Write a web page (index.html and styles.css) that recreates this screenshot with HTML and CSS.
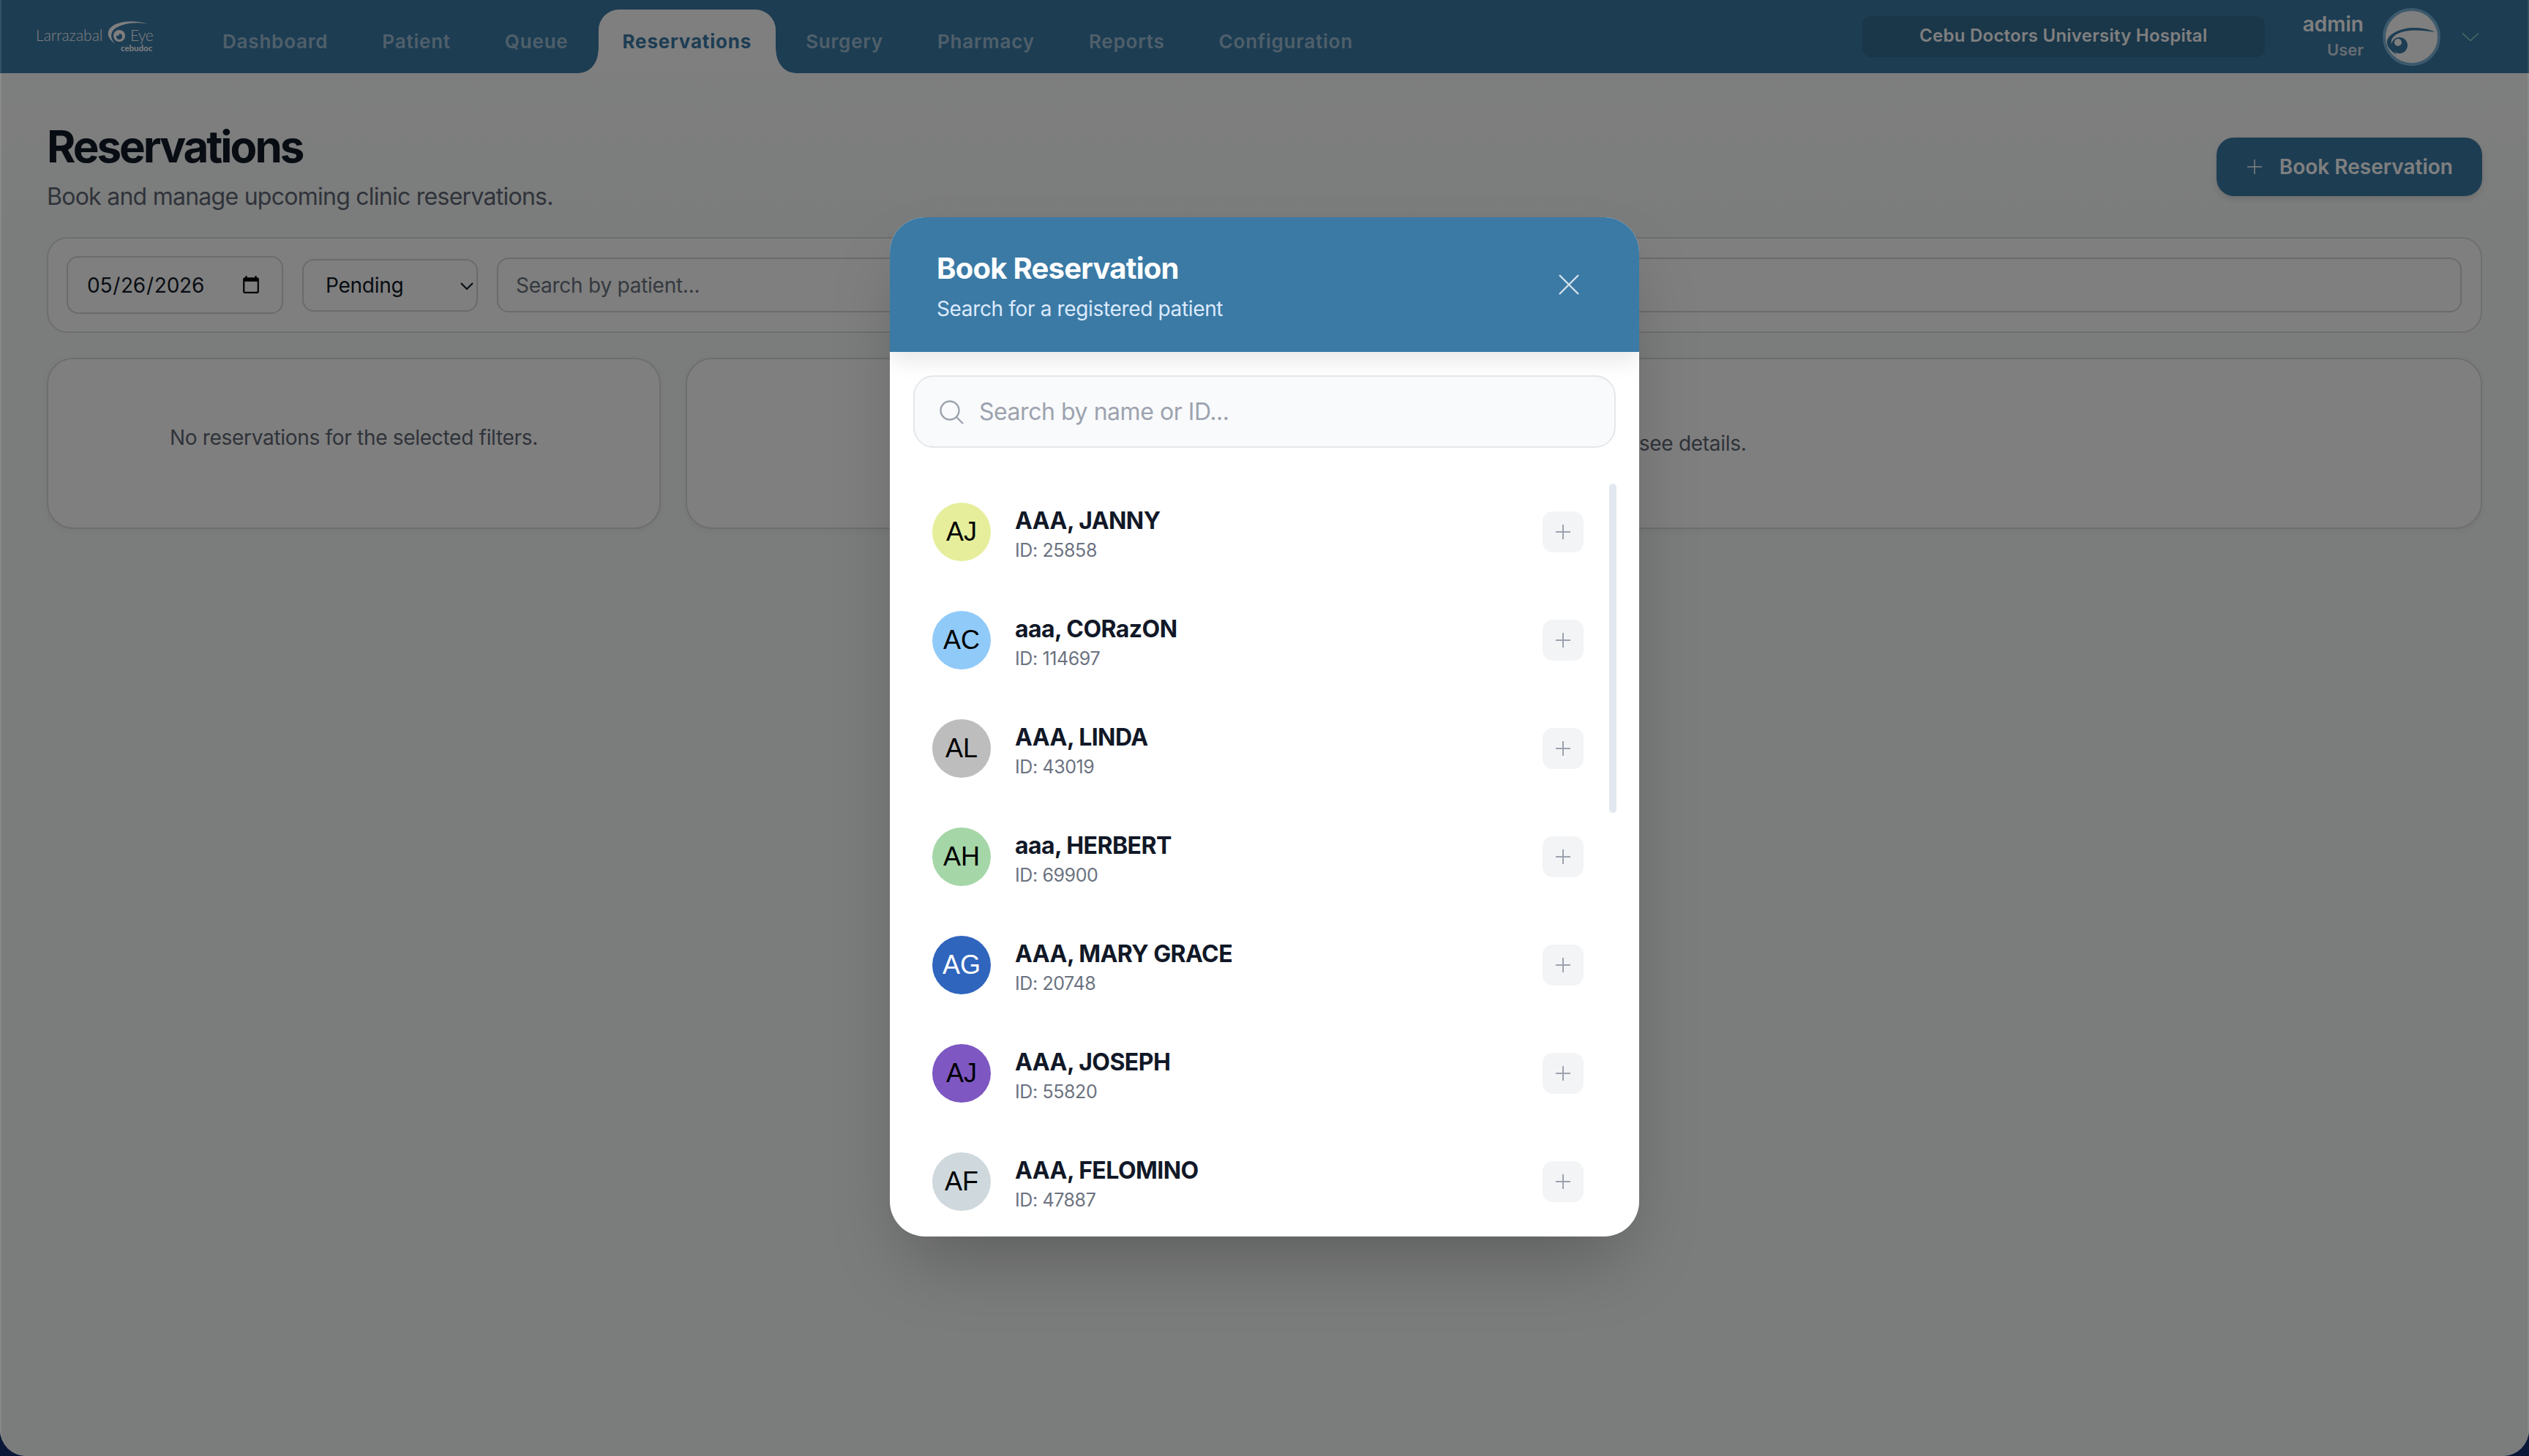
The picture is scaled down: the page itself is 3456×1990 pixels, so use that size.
FILE: index.html
```html
<!DOCTYPE html>
<html>
<head>
	<title>Reservations</title>
	<link rel="stylesheet" href="styles.css">
</head>
<body>
	<div class="window">
		<!-- Navigation Bar -->
		<nav class="topbar">
			<svg class="logo" width="170" height="60" viewBox="0 0 170 60">
				<text x="1" y="36" class="logo-text">Larrazabal</text>
				<text x="130" y="36" class="logo-text logo-eye">Eye</text>
				<path d="M110 40C100 34 96 24 104 17C112 10 132 6 155 13C138 9 118 12 108 20C102 26 103 34 110 40Z" fill="#fff"/>
				<circle cx="115" cy="29" r="8" fill="#fff"/>
				<circle cx="115" cy="30" r="4" fill="#3a7aa6"/>
				<circle cx="113" cy="27" r="2" fill="#fff"/>
				<text x="117" y="50" class="logo-small">cebudoc</text>
			</svg>
			<ul class="nav-links">
				<li><a href="#">Dashboard</a></li>
				<li><a href="#">Patient</a></li>
				<li><a href="#">Queue</a></li>
				<li class="active"><a href="#">Reservations</a></li>
				<li><a href="#">Surgery</a></li>
				<li><a href="#">Pharmacy</a></li>
				<li><a href="#">Reports</a></li>
				<li><a href="#">Configuration</a></li>
			</ul>
			<div class="hospital">Cebu Doctors University Hospital</div>
			<div class="user-info">
				<div class="user-name">admin</div>
				<div class="user-role">User</div>
			</div>
			<div class="user-photo">
				<svg width="71" height="71" viewBox="0 0 71 71">
					<path d="M15 60C6 54 -1 46 3 38C8 28 28 22 40 23C50 23 60 25 68 29C55 27 42 26 32 27C20 28 10 33 8 40C7 47 10 53 15 60Z" fill="#3a7aa6"/>
					<circle cx="19" cy="47" r="11" fill="#3a7aa6"/>
					<circle cx="17" cy="43" r="5" fill="#fff"/>
				</svg>
			</div>
			<svg class="chevron" width="24" height="13" viewBox="0 0 24 13">
				<path d="M1 1.500L12 11.500L23 1.500" fill="none" stroke="#8ce0c8" stroke-width="1.5"/>
			</svg>
		</nav>

		<!-- Reservations Page -->
		<main class="page">
			<div class="page-head">
				<div>
					<h1>Reservations</h1>
					<p class="page-sub">Book and manage upcoming clinic reservations.</p>
				</div>
				<button class="book-btn">
					<svg width="24" height="24" viewBox="0 0 24 24"><path d="M12 2V22M2 12H22" stroke="#fff" stroke-width="1.5"/></svg>
					Book Reservation
				</button>
			</div>

			<div class="filters">
				<input class="filter-date" type="date" value="2026-05-26">
				<select class="filter-status">
					<option>Pending</option>
				</select>
				<input class="filter-search" type="text" placeholder="Search by patient...">
			</div>

			<div class="panels">
				<div class="panel panel-list">No reservations for the selected filters.</div>
				<div class="panel panel-detail">Select a reservation to see details.</div>
			</div>
		</main>

		<!-- Book Reservation Modal -->
		<div class="overlay">
			<div class="modal">
				<div class="modal-head">
					<div>
						<h2>Book Reservation</h2>
						<p>Search for a registered patient</p>
					</div>
					<svg class="modal-close" width="30" height="30" viewBox="0 0 30 30">
						<path d="M2 2L28 28M28 2L2 28" stroke="#d3e1ea" stroke-width="2.4"/>
					</svg>
				</div>
				<div class="modal-body">
					<div class="patient-search">
						<svg width="36" height="36" viewBox="0 0 36 36">
							<circle cx="16" cy="16" r="12.5" fill="none" stroke="#9ca3af" stroke-width="2.4"/>
							<path d="M25 25L34 34" stroke="#9ca3af" stroke-width="2.4"/>
						</svg>
						<input type="text" placeholder="Search by name or ID...">
					</div>
					<div class="patient-list">
						<div class="scroll-thumb"></div>
						<div class="patient">
							<div class="avatar av-lime">AJ</div>
							<div class="patient-info">
								<div class="patient-name">AAA, JANNY</div>
								<div class="patient-id">ID: 25858</div>
							</div>
							<button class="add-btn"><svg width="24" height="24" viewBox="0 0 24 24"><path d="M12 2V22M2 12H22" stroke="#9ca3af" stroke-width="2"/></svg></button>
						</div>
						<div class="patient">
							<div class="avatar av-sky">AC</div>
							<div class="patient-info">
								<div class="patient-name">aaa, CORazON</div>
								<div class="patient-id">ID: 114697</div>
							</div>
							<button class="add-btn"><svg width="24" height="24" viewBox="0 0 24 24"><path d="M12 2V22M2 12H22" stroke="#9ca3af" stroke-width="2"/></svg></button>
						</div>
						<div class="patient">
							<div class="avatar av-gray">AL</div>
							<div class="patient-info">
								<div class="patient-name">AAA, LINDA</div>
								<div class="patient-id">ID: 43019</div>
							</div>
							<button class="add-btn"><svg width="24" height="24" viewBox="0 0 24 24"><path d="M12 2V22M2 12H22" stroke="#9ca3af" stroke-width="2"/></svg></button>
						</div>
						<div class="patient">
							<div class="avatar av-green">AH</div>
							<div class="patient-info">
								<div class="patient-name">aaa, HERBERT</div>
								<div class="patient-id">ID: 69900</div>
							</div>
							<button class="add-btn"><svg width="24" height="24" viewBox="0 0 24 24"><path d="M12 2V22M2 12H22" stroke="#9ca3af" stroke-width="2"/></svg></button>
						</div>
						<div class="patient">
							<div class="avatar av-blue">AG</div>
							<div class="patient-info">
								<div class="patient-name">AAA, MARY GRACE</div>
								<div class="patient-id">ID: 20748</div>
							</div>
							<button class="add-btn"><svg width="24" height="24" viewBox="0 0 24 24"><path d="M12 2V22M2 12H22" stroke="#9ca3af" stroke-width="2"/></svg></button>
						</div>
						<div class="patient">
							<div class="avatar av-purple">AJ</div>
							<div class="patient-info">
								<div class="patient-name">AAA, JOSEPH</div>
								<div class="patient-id">ID: 55820</div>
							</div>
							<button class="add-btn"><svg width="24" height="24" viewBox="0 0 24 24"><path d="M12 2V22M2 12H22" stroke="#9ca3af" stroke-width="2"/></svg></button>
						</div>
						<div class="patient">
							<div class="avatar av-slate">AF</div>
							<div class="patient-info">
								<div class="patient-name">AAA, FELOMINO</div>
								<div class="patient-id">ID: 47887</div>
							</div>
							<button class="add-btn"><svg width="24" height="24" viewBox="0 0 24 24"><path d="M12 2V22M2 12H22" stroke="#9ca3af" stroke-width="2"/></svg></button>
						</div>
					</div>
				</div>
			</div>
		</div>
	</div>
</body>
</html>
```

FILE: styles.css
```css
html, body {
	margin: 0;
	height: 100%;
	background-color: #0b1838;
	overflow: hidden;
}

body {
	font-family: Inter, "Liberation Sans", sans-serif;
}

.window {
	position: relative;
	height: 1990px;
	overflow: hidden;
	border-radius: 0 0 36px 36px;
	background: linear-gradient(#fefefe 0, #f6faf8 340px);
}

/* Navigation Bar */
.topbar {
	display: flex;
	align-items: center;
	height: 100px;
	padding: 0 68px 0 48px;
	background-color: #3a7aa6;
}

.logo {
	flex: none;
	margin: 0 53px 0 0;
}

.logo-text {
	font-family: Lato, sans-serif;
	font-weight: 300;
	font-size: 21px;
	fill: #fff;
}

.logo-eye {
	letter-spacing: -0.6px;
}

.logo-small {
	font-family: Lato, sans-serif;
	font-weight: 700;
	font-size: 11.5px;
	fill: #fff;
}

.nav-links {
	list-style: none;
	margin: 0;
	padding: 0;
	display: flex;
	gap: 8px;
	align-self: flex-end;
	flex: 1;
	height: 87px;
}

.nav-links li {
	position: relative;
	display: flex;
	align-items: center;
	padding: 0 33px;
	border-radius: 28px 28px 0 0;
}

.nav-links a {
	color: #ddeaf3;
	opacity: 0.62;
	font-size: 26px;
	font-weight: 600;
	letter-spacing: 0.8px;
	text-decoration: none;
}

.nav-links .active {
	background-color: #fff;
}

.nav-links .active a {
	color: #3a7aa6;
	font-weight: 700;
	opacity: 1;
}

.nav-links .active::before,
.nav-links .active::after {
	content: "";
	position: absolute;
	bottom: 0;
	width: 26px;
	height: 32px;
}

.nav-links .active::before {
	left: -26px;
	background: radial-gradient(26px 32px at 0 0, transparent 97%, #fff 100%);
}

.nav-links .active::after {
	right: -26px;
	background: radial-gradient(26px 32px at 100% 0, transparent 97%, #fff 100%);
}

.hospital {
	flex: none;
	box-sizing: border-box;
	width: 550px;
	margin-right: 52px;
	padding: 13px 0 15px;
	text-align: center;
	color: #fff;
	font-size: 24px;
	font-weight: 600;
	line-height: 28px;
	letter-spacing: 0.25px;
	border-radius: 12px;
	background-color: #346c93;
}

.user-info {
	flex: none;
	text-align: right;
	margin-right: 26px;
}

.user-name {
	color: #fff;
	font-size: 28px;
	font-weight: 600;
	line-height: 36px;
	margin-top: -3px;
}

.user-role {
	color: #cfdbe4;
	font-size: 22px;
	font-weight: 600;
	line-height: 30px;
	margin-top: 2px;
}

.user-photo {
	flex: none;
	display: flex;
	align-items: center;
	justify-content: center;
	box-sizing: border-box;
	width: 79px;
	height: 79px;
	border: 4px solid #7ab4d8;
	border-radius: 50%;
	background-color: #fff;
}

.chevron {
	flex: none;
	margin-left: 29px;
}

/* Reservations Page */
.page {
	padding: 0 64px;
}

.page-head {
	display: flex;
	justify-content: space-between;
	align-items: center;
	padding-top: 70px;
}

h1 {
	margin: 0;
	color: #111827;
	font-size: 60px;
	font-weight: 700;
	line-height: 60px;
	letter-spacing: -3px;
}

.page-sub {
	margin: 20px 0 0;
	color: #5f6674;
	font-size: 32px;
	line-height: 38px;
	letter-spacing: -0.74px;
}

.book-btn {
	display: flex;
	align-items: center;
	gap: 22px;
	height: 80px;
	margin-bottom: 2px;
	padding: 0 40px;
	border: none;
	border-radius: 24px;
	color: #fff;
	font-family: inherit;
	font-size: 28px;
	font-weight: 600;
	background-color: #3a7aa6;
	box-shadow: 0 4px 10px rgba(0, 0, 0, 0.12);
}

.filters {
	display: flex;
	align-items: center;
	gap: 26px;
	box-sizing: border-box;
	height: 131px;
	margin-top: 36px;
	padding: 0 26px 0 25px;
	border: 2px solid #dcdcdc;
	border-radius: 28px;
	background-color: #fff;
}

.filters input, .filters select {
	box-sizing: border-box;
	border: 2px solid #d6d6d6;
	border-radius: 16px;
	font-family: inherit;
	font-size: 28px;
	letter-spacing: -0.25px;
	background-color: #fff;
}

.filter-date {
	width: 296px;
	height: 79px;
	padding: 0 26px 0 25px;
	color: #111827;
}

.filters .filter-status {
	appearance: none;
	width: 240px;
	height: 72px;
	padding: 0 0 0 30px;
	color: #111827;
	background-image: url("data:image/svg+xml,%3Csvg xmlns='http://www.w3.org/2000/svg' width='18' height='12' viewBox='0 0 18 12'%3E%3Cpath d='M1 2L9 10L17 2' fill='none' stroke='%23111827' stroke-width='2.200'/%3E%3C/svg%3E");
	background-repeat: no-repeat;
	background-position: 214px 29px;
}

.filter-search {
	flex: 1;
	height: 75px;
	padding: 0 24px;
}

.filter-search::placeholder {
	color: #6b7280;
}

.panels {
	display: grid;
	grid-template-columns: 839px 1fr;
	gap: 34px;
	margin-top: 34px;
}

.panel {
	box-sizing: border-box;
	display: flex;
	justify-content: center;
	height: 234px;
	border: 2px solid #dcdcdc;
	border-radius: 36px;
	color: #5f6674;
	font-size: 28px;
	letter-spacing: -0.3px;
	background-color: #fff;
	box-shadow: 0 2px 8px rgba(0, 0, 0, 0.05);
}

.panel-list {
	padding-top: 90px;
}

.panel-detail {
	padding-top: 98px;
}

/* Book Reservation Modal */
.overlay {
	position: absolute;
	top: 0;
	left: 0;
	right: 0;
	bottom: 0;
	display: flex;
	justify-content: center;
	align-items: center;
	padding-bottom: 3px;
	border-left: 2px solid rgba(255, 255, 255, 0.1);
	border-right: 2px solid rgba(255, 255, 255, 0.1);
	background-color: rgba(0, 0, 0, 0.5);
}

.modal {
	box-sizing: border-box;
	width: 1024px;
	height: 1393px;
	overflow: hidden;
	border-radius: 48px;
	background-color: #fff;
	box-shadow: 0 50px 100px -24px rgba(0, 0, 0, 0.25);
}

.modal-head {
	position: relative;
	display: flex;
	justify-content: space-between;
	align-items: center;
	box-sizing: border-box;
	height: 184px;
	padding: 4px 81px 0 64px;
	background-color: #3b7aa5;
	box-shadow: 0 10px 30px rgba(0, 0, 0, 0.1);
}

.modal-head svg {
	margin-top: -4px;
}

.modal-head h2 {
	margin: 0;
	color: #fff;
	font-size: 40px;
	font-weight: 700;
	line-height: 48px;
	letter-spacing: -0.75px;
}

.modal-head p {
	margin: 14px 0 0;
	color: #dbeafe;
	font-size: 28px;
	line-height: 34px;
	letter-spacing: -0.35px;
}

.modal-body {
	padding: 32px 32px 0;
}

.patient-search {
	display: flex;
	align-items: center;
	gap: 20px;
	box-sizing: border-box;
	height: 99px;
	padding: 0 32px;
	border: 2px solid #e5e7eb;
	border-radius: 28px;
	background-color: #f9fafb;
}

.patient-search input {
	flex: 1;
	border: none;
	outline: none;
	padding: 0;
	font-family: inherit;
	font-size: 32px;
	letter-spacing: -0.45px;
	background: transparent;
}

.patient-search input::placeholder {
	color: #9ca3af;
}

.patient-list {
	position: relative;
	margin-top: 41px;
}

.scroll-thumb {
	position: absolute;
	top: 8px;
	right: -1px;
	width: 10px;
	height: 450px;
	border-radius: 5px;
	background-color: #e2e8f0;
}

.patient {
	display: flex;
	align-items: center;
	height: 148px;
	padding: 0 44px 0 26px;
}

.avatar {
	flex: none;
	display: flex;
	align-items: center;
	justify-content: center;
	width: 80px;
	height: 80px;
	border-radius: 50%;
	color: #000;
	font-family: "Liberation Sans", Arial, sans-serif;
	font-size: 36px;
}

.av-lime { background-color: #e6ee9c; }
.av-sky { background-color: #90caf9; }
.av-gray { background-color: #bdbdbd; }
.av-green { background-color: #a5d6a7; }
.av-blue { background-color: #2f65bd; color: #fff; }
.av-purple { background-color: #7e57c2; }
.av-slate { background-color: #cfd8dc; }

.patient-info {
	flex: 1;
	margin-left: 33px;
	padding-top: 9px;
}

.patient-name {
	color: #111827;
	font-size: 32px;
	font-weight: 700;
	line-height: 40px;
	letter-spacing: -0.55px;
}

.patient-id {
	margin-top: 1px;
	color: #6b7280;
	font-size: 25px;
	line-height: 38px;
	letter-spacing: -0.4px;
}

.add-btn {
	flex: none;
	display: flex;
	align-items: center;
	justify-content: center;
	width: 56px;
	height: 56px;
	padding: 0;
	border: none;
	border-radius: 14px;
	background-color: #f3f4f6;
}
```
